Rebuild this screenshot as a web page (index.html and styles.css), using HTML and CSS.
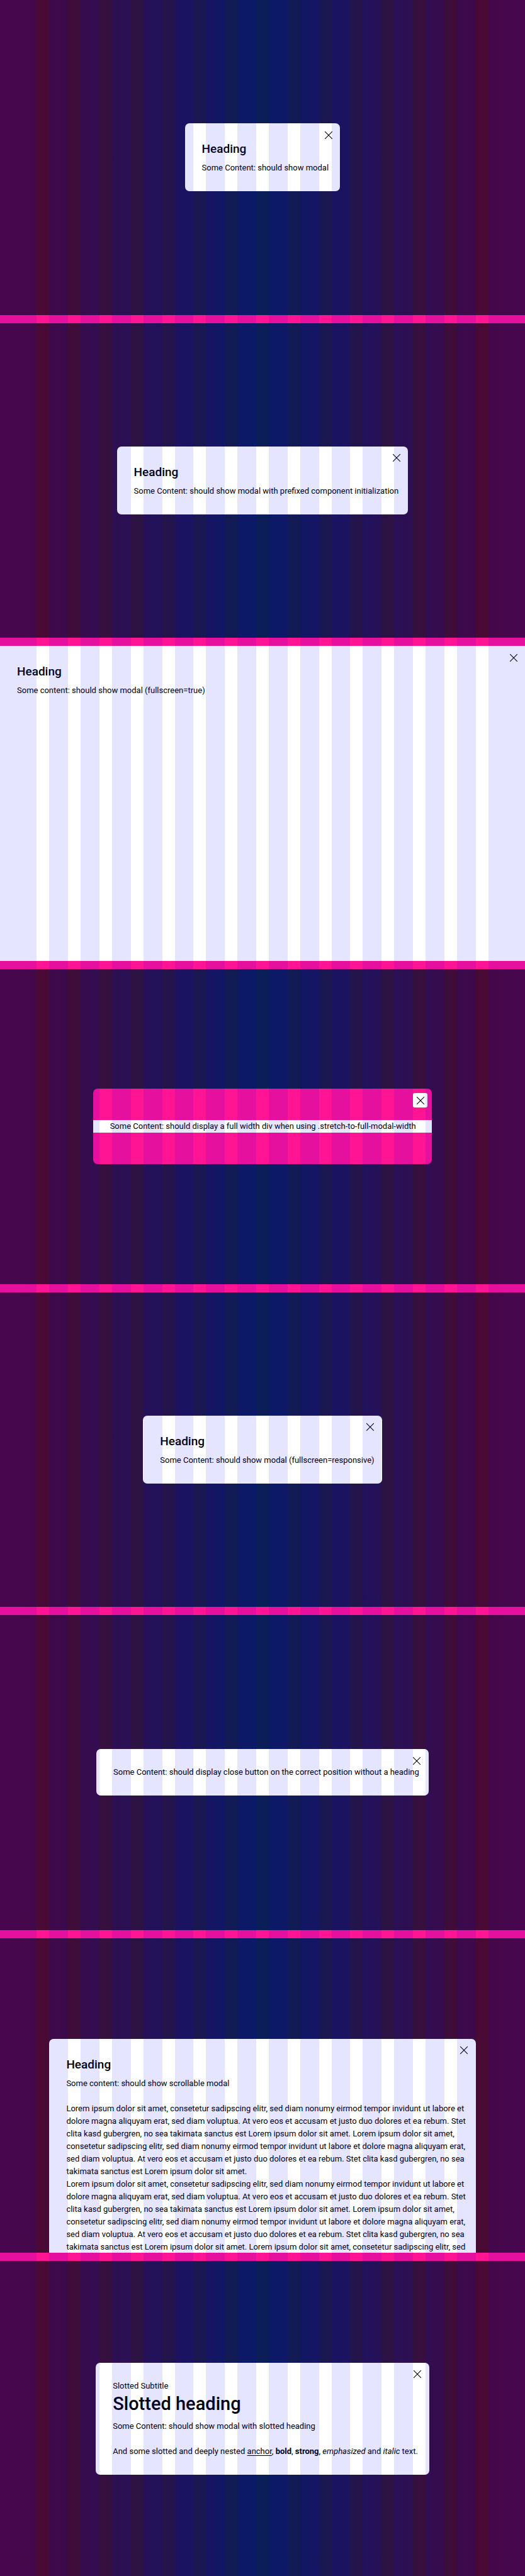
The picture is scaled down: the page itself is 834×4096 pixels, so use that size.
FILE: index.html
```
<!DOCTYPE html>
<html lang="en">
<head>
<meta charset="utf-8">
<title>Modal</title>
<link rel="stylesheet" href="styles.css">
</head>
<body>
<svg class="sprite" aria-hidden="true"><symbol id="close" viewBox="0 0 24 24"><path d="M5 5 19 19M19 5 5 19" fill="none" stroke="currentColor" stroke-width="1.3"/></symbol></svg>
<main class="playground">
  <section class="stage">
    <div class="modal basic" role="dialog" aria-labelledby="h1">
      <button class="close" aria-label="Close"><svg><use href="#close"/></svg></button>
      <h2 id="h1">Heading</h2>
      <p>Some Content: should show modal</p>
    </div>
  </section>
  <section class="stage">
    <div class="modal prefixed" role="dialog" aria-labelledby="h2">
      <button class="close" aria-label="Close"><svg><use href="#close"/></svg></button>
      <h2 id="h2">Heading</h2>
      <p>Some Content: should show modal with prefixed component initialization</p>
    </div>
  </section>
  <section class="stage">
    <div class="modal fullscreen" role="dialog" aria-labelledby="h3">
      <button class="close" aria-label="Close"><svg><use href="#close"/></svg></button>
      <h2 id="h3">Heading</h2>
      <p>Some content: should show modal (fullscreen=true)</p>
    </div>
  </section>
  <section class="stage">
    <div class="modal pink" role="dialog" aria-label="Full width content">
      <button class="close" aria-label="Close"><svg><use href="#close"/></svg></button>
      <div class="stretch">Some Content: should display a full width div when using .stretch-to-full-modal-width</div>
    </div>
  </section>
  <section class="stage">
    <div class="modal responsive" role="dialog" aria-labelledby="h5">
      <button class="close" aria-label="Close"><svg><use href="#close"/></svg></button>
      <h2 id="h5">Heading</h2>
      <p>Some Content: should show modal (fullscreen=responsive)</p>
    </div>
  </section>
  <section class="stage">
    <div class="modal plain" role="dialog" aria-label="Without heading">
      <button class="close" aria-label="Close"><svg><use href="#close"/></svg></button>
      <p>Some Content: should display close button on the correct position without a heading</p>
    </div>
  </section>
  <section class="stage">
    <div class="modal scrollable" role="dialog" aria-labelledby="h7">
      <button class="close" aria-label="Close"><svg><use href="#close"/></svg></button>
      <h2 id="h7">Heading</h2>
      <p>Some content: should show scrollable modal</p>
      <p class="lorem">Lorem ipsum dolor sit amet, consetetur sadipscing elitr, sed diam nonumy eirmod tempor invidunt ut labore et<br>dolore magna aliquyam erat, sed diam voluptua. At vero eos et accusam et justo duo dolores et ea rebum. Stet<br>clita kasd gubergren, no sea takimata sanctus est Lorem ipsum dolor sit amet. Lorem ipsum dolor sit amet,<br>consetetur sadipscing elitr, sed diam nonumy eirmod tempor invidunt ut labore et dolore magna aliquyam erat,<br>sed diam voluptua. At vero eos et accusam et justo duo dolores et ea rebum. Stet clita kasd gubergren, no sea<br>takimata sanctus est Lorem ipsum dolor sit amet.<br>Lorem ipsum dolor sit amet, consetetur sadipscing elitr, sed diam nonumy eirmod tempor invidunt ut labore et<br>dolore magna aliquyam erat, sed diam voluptua. At vero eos et accusam et justo duo dolores et ea rebum. Stet<br>clita kasd gubergren, no sea takimata sanctus est Lorem ipsum dolor sit amet. Lorem ipsum dolor sit amet,<br>consetetur sadipscing elitr, sed diam nonumy eirmod tempor invidunt ut labore et dolore magna aliquyam erat,<br>sed diam voluptua. At vero eos et accusam et justo duo dolores et ea rebum. Stet clita kasd gubergren, no sea<br>takimata sanctus est Lorem ipsum dolor sit amet. Lorem ipsum dolor sit amet, consetetur sadipscing elitr, sed</p>
    </div>
  </section>
  <section class="stage">
    <div class="modal slotted" role="dialog" aria-labelledby="h8">
      <button class="close" aria-label="Close"><svg><use href="#close"/></svg></button>
      <p class="subtitle">Slotted Subtitle</p>
      <h2 class="large" id="h8">Slotted heading</h2>
      <p>Some Content: should show modal with slotted heading</p>
      <p class="nested">And some slotted and deeply nested <a href="#h8">anchor</a>, <b>bold</b>, <strong>strong</strong>, <em>emphasized</em> and <i>italic</i> text.</p>
    </div>
  </section>
  <div class="columns" aria-hidden="true"><i></i><i></i><i></i><i></i><i></i><i></i><i></i><i></i><i></i><i></i><i></i><i></i><i></i><i></i><i></i><i></i></div>
</main>
</body>
</html>
```
FILE: styles.css
```
* { box-sizing: border-box; }
body {
  margin: 0;
  font-family: Roboto, "Liberation Sans", sans-serif;
  font-size: 13px;
  line-height: 20px;
  color: #010205;
}
.sprite { display: none; }
.playground {
  position: relative;
  display: grid;
  grid-auto-rows: minmax(0, 1fr);
  gap: 13px;
  height: 100vh;
  background: #ff1493;
}
.stage {
  display: flex;
  align-items: center;
  justify-content: center;
  min-height: 0;
  overflow: hidden;
  background: linear-gradient(90deg, #52063a, #490a34 8%, #311140 23%, #1d1650 36%, #0a1e57 50%, #1d1650 64%, #311140 77%, #490a34 92%, #52063a);
}
.modal {
  position: relative;
  padding: 27px;
  background: #fff;
  border-radius: 7px;
  white-space: nowrap;
}
.basic { width: 29.6%; }
.prefixed { width: 55.5%; }
.responsive { width: 45.5%; }
.plain { width: 63.3%; }
.slotted { width: 63.5%; }
h2 {
  margin: 0 0 7px;
  font-size: 19px;
  line-height: 27px;
  font-weight: 500;
}
p { margin: 0; }
.large { font-size: 29px; line-height: 37px; }
.close {
  position: absolute;
  top: 7px;
  right: 7px;
  display: grid;
  place-items: center;
  width: 23px;
  height: 23px;
  padding: 0;
  border: 0;
  border-radius: 3px;
  background: #fff;
  color: #010205;
}
.close svg { width: 20px; height: 20px; }
.fullscreen {
  align-self: stretch;
  width: 100%;
  border-radius: 0;
}
.pink { width: 64.6%; padding: 50px 0; background: #ff1493; }
.stretch { padding: 0 27px; background: #fff; }
.scrollable {
  align-self: flex-start;
  width: 81.2%;
  margin-top: 160px;
}
.lorem, .nested { margin-top: 20px; }
a { color: inherit; text-underline-offset: 2px; }
.columns {
  position: absolute;
  inset: 0;
  display: grid;
  grid-template-columns: 7% repeat(14, 1fr) 7%;
  column-gap: 20px;
  pointer-events: none;
}
.columns i { background: rgba(0, 0, 255, 0.1); }
```
